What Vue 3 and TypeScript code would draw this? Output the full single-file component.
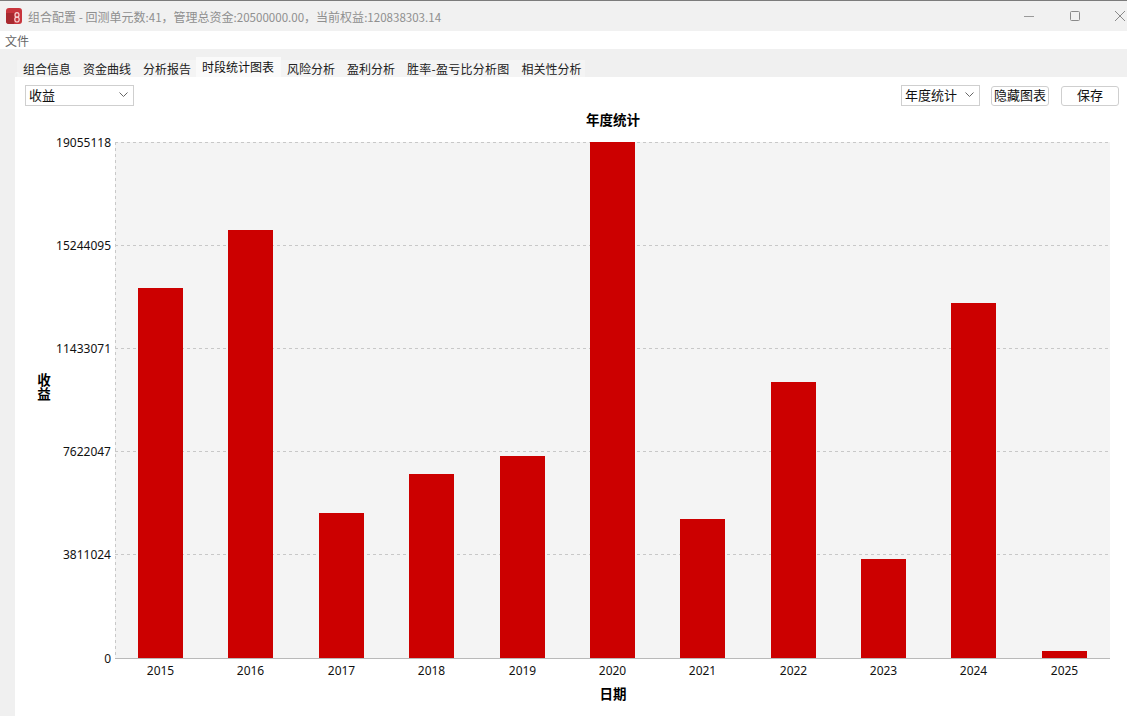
<script setup lang="ts">
const tabs: string[] = ['组合信息', '资金曲线', '分析报告', '时段统计图表', '风险分析', '盈利分析', '胜率-盈亏比分析图', '相关性分析']
const activeTab = 3
const bars: { year: string; x: number; top: number }[] = [
  { year: '2015', x: 138, top: 288 },
  { year: '2016', x: 228, top: 230 },
  { year: '2017', x: 319, top: 513 },
  { year: '2018', x: 409, top: 474 },
  { year: '2019', x: 500, top: 456 },
  { year: '2020', x: 590, top: 142 },
  { year: '2021', x: 680, top: 519 },
  { year: '2022', x: 771, top: 382 },
  { year: '2023', x: 861, top: 559 },
  { year: '2024', x: 951, top: 303 },
  { year: '2025', x: 1042, top: 651 },
]
const ticks: { label: string; y: number }[] = [
  { label: '19055118', y: 142 },
  { label: '15244095', y: 245 },
  { label: '11433071', y: 348 },
  { label: '7622047', y: 451 },
  { label: '3811024', y: 554 },
  { label: '0', y: 658 },
]
</script>

<template>
  <div class="window">
    <header class="titlebar">
      <div class="title-left">
        <svg class="app-icon" width="16" height="16" viewBox="0 0 16 16">
          <rect width="16" height="16" rx="3" fill="#c8353c" />
          <path d="M0 5 H8 V16 H3 Q0 16 0 13 Z" fill="#a82a30" />
          <ellipse cx="11" cy="7" rx="2" ry="2.4" fill="none" stroke="#f6d5d5" stroke-width="1.2" />
          <ellipse cx="11" cy="11.5" rx="2.2" ry="2.5" fill="none" stroke="#f6d5d5" stroke-width="1.2" />
        </svg>
        <span class="title-text">组合配置 - 回测单元数<span class="num">:41</span>，管理总资金<span class="num">:20500000.00</span>，当前权益<span class="num">:120838303.14</span></span>
      </div>
      <div class="win-controls">
        <svg width="12" height="12" viewBox="0 0 12 12"><path d="M1 6.5 H11" stroke="#9a9a9a" fill="none" /></svg>
        <svg width="12" height="12" viewBox="0 0 12 12"><rect x="1.5" y="1.5" width="9" height="9" rx="1" stroke="#8a8a8a" fill="none" /></svg>
        <svg width="12" height="12" viewBox="0 0 12 12"><path d="M1 1 L11 11 M11 1 L1 11" stroke="#8a8a8a" fill="none" /></svg>
      </div>
    </header>

    <nav class="menubar"><span>文件</span></nav>

    <div class="tabstrip">
      <div
        v-for="(tab, i) in tabs"
        :key="tab"
        class="tab"
        :class="{ active: i === activeTab }"
      >{{ tab }}</div>
    </div>

    <div class="body">
      <main class="panel">
        <div class="toolbar">
          <div class="select metric">
            <span>收益</span>
            <svg width="9" height="6" viewBox="0 0 9 6"><path d="M0.5 0.5 L4.5 4.5 L8.5 0.5" stroke="#666" fill="none" /></svg>
          </div>
          <div class="toolbar-right">
            <div class="select period">
              <span>年度统计</span>
              <svg width="9" height="6" viewBox="0 0 9 6"><path d="M0.5 0.5 L4.5 4.5 L8.5 0.5" stroke="#666" fill="none" /></svg>
            </div>
            <button class="btn hide">隐藏图表</button>
            <button class="btn save">保存</button>
          </div>
        </div>

        <svg class="chart" width="1112" height="639" viewBox="15 77 1112 639">
          <rect x="115" y="142" width="995" height="516" fill="#f4f4f4" />
          <line
            v-for="t in ticks.slice(0, 5)"
            :key="t.label"
            x1="115"
            x2="1110"
            :y1="t.y + 0.5"
            :y2="t.y + 0.5"
            class="grid"
          />
          <line x1="115.5" x2="115.5" y1="142" y2="658" class="grid" />
          <rect
            v-for="b in bars"
            :key="b.year"
            :x="b.x"
            :y="b.top"
            width="45"
            :height="658 - b.top"
            fill="#cc0000"
          />
          <line x1="115" x2="1110" y1="658.5" y2="658.5" stroke="#b9b9b9" />

          <text
            v-for="t in ticks"
            :key="'l' + t.label"
            x="111"
            :y="t.y + 5"
            text-anchor="end"
            class="tick"
          >{{ t.label }}</text>
          <text
            v-for="b in bars"
            :key="'y' + b.year"
            :x="b.x + 22.5"
            y="675"
            text-anchor="middle"
            class="tick"
          >{{ b.year }}</text>

          <text x="613" y="125" text-anchor="middle" class="axis-title">年度统计</text>
          <text x="613" y="699" text-anchor="middle" class="axis-title">日期</text>
          <text x="44" y="387" text-anchor="middle" class="axis-title upright">收益</text>
        </svg>
      </main>
    </div>
  </div>
</template>

<style>
html, body { margin: 0; padding: 0; background: #fff; }
</style>

<style scoped>
.window {
  width: 1127px;
  height: 716px;
  display: flex;
  flex-direction: column;
  overflow: hidden;
  font-family: "Noto Sans CJK SC", "DejaVu Sans", sans-serif;
  font-size: 12px;
  color: #111;
  background: #fff;
}
.titlebar {
  height: 30px;
  flex: none;
  border-top: 1px solid #7c7c7c;
  background: #f1f1f1;
  display: flex;
  align-items: center;
  justify-content: space-between;
}
.title-left {
  display: flex;
  align-items: center;
  gap: 6px;
  padding-left: 6px;
}
.app-icon { display: block; }
.title-text {
  color: #8f8f8f;
  font-size: 12px;
  white-space: nowrap;
}
.num { font-size: 11.55px; }
.win-controls {
  display: flex;
  align-items: center;
  gap: 33px;
  padding-right: 1px;
}
.win-controls svg { display: block; }
.win-controls svg:first-child { margin-right: 1px; }
.menubar {
  height: 18px;
  flex: none;
  padding-left: 5px;
  line-height: 19px;
  color: #666;
  background: #fff;
}
.tabstrip {
  height: 28px;
  flex: none;
  background: #f0f0f0;
  display: flex;
  align-items: flex-end;
  padding-left: 17px;
}
.tab {
  height: 17px;
  line-height: 17px;
  padding: 0 6px;
  background: #f4f4f4;
  border-right: 1px solid #e4e4e4;
  white-space: nowrap;
  color: #222;
}
.tab + .tab { margin-left: -1px; }
.tab:nth-child(7) { letter-spacing: 0.25px; }
.tab:last-child { padding-right: 3px; border-right: none; }
.tab.active {
  height: 20px;
  line-height: 19px;
  padding: 0 7px 0 6px;
  margin-left: -2px;
  background: #fafafa;
  color: #111;
  border-right: none;
}
.tab.active + .tab { margin-left: 0; }
.body {
  flex: 1;
  display: flex;
  background: #f0f0f0;
  padding-left: 15px;
  min-height: 0;
}
.panel {
  flex: 1;
  position: relative;
  background: #fff;
  min-width: 0;
}
.toolbar {
  position: relative;
  z-index: 1;
  display: flex;
  align-items: flex-start;
  justify-content: space-between;
  padding: 8px 8px 0 10px;
}
.toolbar-right {
  display: flex;
  align-items: center;
  gap: 11px;
}
.select {
  height: 21px;
  box-sizing: border-box;
  border: 1px solid #cfcfcf;
  background: #fff;
  display: flex;
  align-items: center;
  justify-content: space-between;
  font-size: 13px;
  line-height: 17px;
  color: #111;
  padding: 0 5px 2px 3px;
}
.metric { width: 109px; }
.period { width: 79px; }
.btn {
  height: 20px;
  box-sizing: border-box;
  padding: 0 0 2px;
  border: 1px solid #cfcfcf;
  border-radius: 3px;
  background: #fff;
  font-family: inherit;
  font-size: 13px;
  line-height: 16px;
  color: #111;
}
.hide { width: 58px; }
.save { width: 58px; margin-left: 1px; }
.chart {
  position: absolute;
  left: 0;
  top: 0;
  display: block;
}
.grid {
  stroke: #c8c8c8;
  stroke-dasharray: 3 3;
}
.tick {
  font-family: "Noto Sans", sans-serif;
  font-size: 12px;
  fill: #111;
}
.axis-title {
  font-family: "Noto Sans CJK SC", sans-serif;
  font-size: 13.5px;
  font-weight: 700;
  fill: #000;
}
.upright {
  writing-mode: vertical-rl;
  text-orientation: upright;
}
</style>
